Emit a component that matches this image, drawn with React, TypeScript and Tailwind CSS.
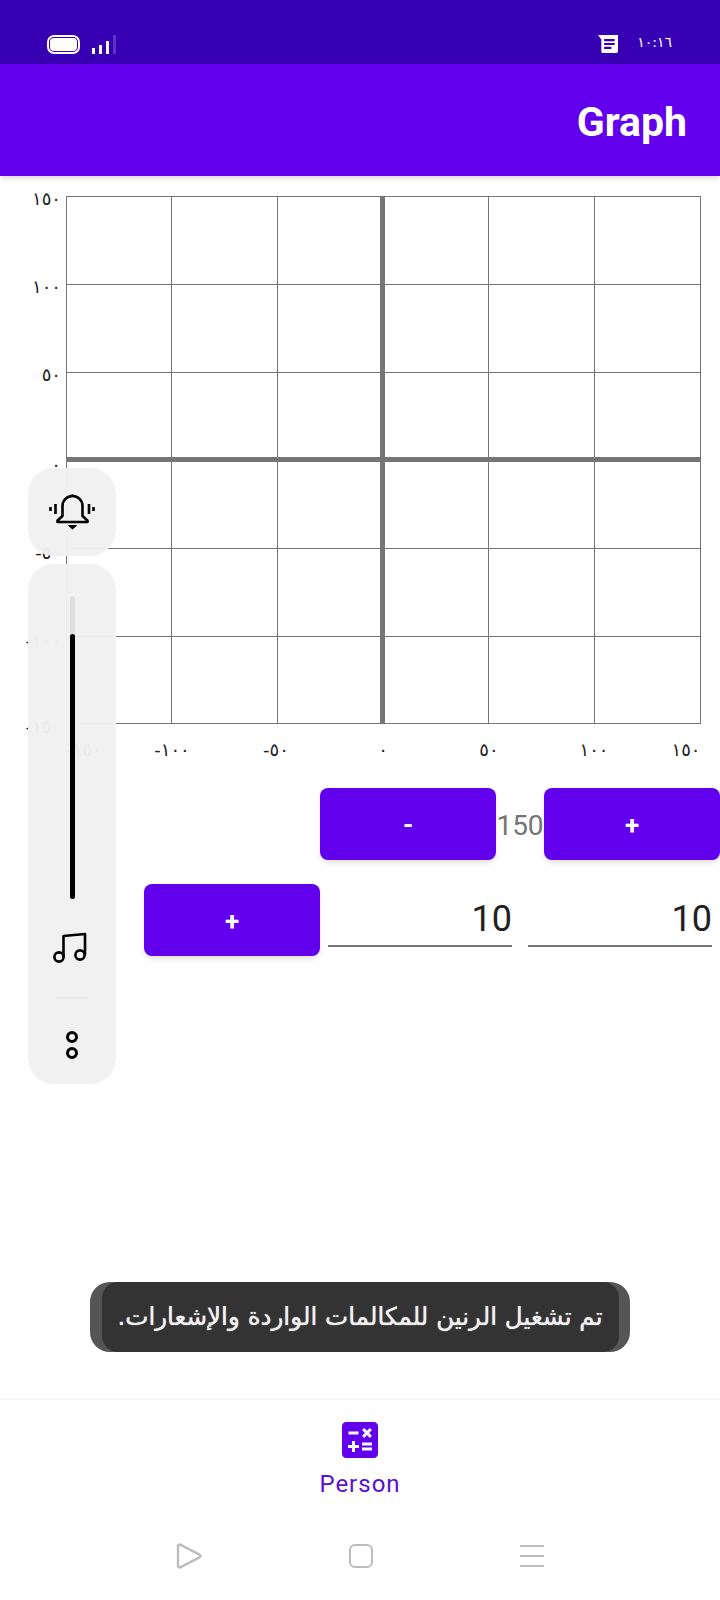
const verticals = [66.5, 171.5, 277.5, 382.5, 488.5, 594.5, 700.5];
const horizontals = [196.5, 284.5, 372.5, 459.5, 548.5, 636.5, 723.5];

const yLabels = [
  { text: "١٥٠", y: 205 },
  { text: "١٠٠", y: 293 },
  { text: "٥٠", y: 381 },
  { text: "٠", y: 471 },
  { text: "-٥٠", y: 559 },
  { text: "-١٠٠", y: 647 },
  { text: "-١٥٠", y: 733 },
];

const xLabels = [
  { text: "-١٥٠", x: 84 },
  { text: "-١٠٠", x: 172 },
  { text: "-٥٠", x: 276 },
  { text: "٠", x: 383 },
  { text: "٥٠", x: 489 },
  { text: "١٠٠", x: 594 },
  { text: "١٥٠", x: 686 },
];

function Chart() {
  return (
    <svg viewBox="0 176 720 594" className="block w-[720px] h-[594px]">
      {verticals.map((x, i) => (
        <line key={x} x1={x} x2={x} y1={196} y2={724} stroke="#757575" strokeWidth={i === 3 ? 5 : 1} />
      ))}
      {horizontals.map((y, i) => (
        <line key={y} x1={66} x2={701} y1={y} y2={y} stroke="#757575" strokeWidth={i === 3 ? 5 : 1} />
      ))}
      {yLabels.map(l => (
        <text key={l.text} x={61} y={l.y} textAnchor="end" className="fill-[#222222] text-[18px] font-['DejaVu_Sans',sans-serif]">{l.text}</text>
      ))}
      {xLabels.map(l => (
        <text key={l.text} x={l.x} y={756} textAnchor="middle" className="fill-[#222222] text-[18px] font-['DejaVu_Sans',sans-serif]">{l.text}</text>
      ))}
    </svg>
  );
}

function StatusBar() {
  return (
    <div className="h-16 bg-[#3700b3] flex items-end justify-between pb-[10px] pl-[47px] pr-[48px]">
      <div className="flex items-end gap-3">
        <div className="w-[33px] h-[19px] rounded-[7px] border-2 border-white p-[1px]">
          <div className="h-full rounded-[4px] bg-white" />
        </div>
        <div className="flex items-end gap-[4px] pr-[1px]">
          <div className="w-[3px] h-[6px] bg-white" />
          <div className="w-[3px] h-[9px] bg-white" />
          <div className="w-[3px] h-[13px] bg-white" />
          <div className="w-[3px] h-[19px] bg-white/20" />
        </div>
      </div>
      <div className="flex items-center gap-[19px] pb-[1px]">
        <svg viewBox="0 0 18 16" className="w-5 h-[18px] fill-white">
          <path fillRule="evenodd" d="M0 0H18V14.5a1.5 1.5 0 0 1-1.5 1.5H4a1 1 0 0 1-1-1V4zM5.5 3.5V5.5H15V3.5zM5.5 7V9H15V7zM5.5 10.5V12.5H12V10.5z" />
        </svg>
        <span className="text-white text-[14px] leading-4 font-['DejaVu_Sans',sans-serif] mb-[3px]">١٠:١٦</span>
      </div>
    </div>
  );
}

function PurpleButton({ label }: { label: string }) {
  return (
    <button className="w-[176px] h-[72px] pt-[3px] rounded-lg bg-[#6200ee] text-white text-[26px] font-bold shadow-md flex items-center justify-center">
      {label}
    </button>
  );
}

function NumberField({ value }: { value: string }) {
  return (
    <div className="w-[184px] h-[63px] border-b-2 border-[#757575] text-right text-[36px] leading-[42px] text-[#212121] pt-[14px]">
      {value}
    </div>
  );
}

function VolumePanels() {
  return (
    <div className="absolute left-[28px] top-[468px] w-[88px] flex flex-col gap-2">
      <div className="h-[88px] rounded-[26px] bg-[#f1f1f1]/97 flex items-center justify-center">
        <svg viewBox="0 0 48 48" className="w-12 h-12 -mt-[2px] fill-none stroke-black" strokeWidth={2.6}>
          <path strokeLinejoin="round" d="M14.5 29V19a10 10 0 0 1 20 0V29l5 4.5V35H9.5V33.5z" />
          <path d="M24.5 7.5V9M7.5 17V27M41 17V27M2.5 20V24M45.5 20V24" />
          <path d="M20.5 38.5H28.5L24.5 42z" className="fill-black" strokeWidth={1} />
        </svg>
      </div>
      <div className="h-[520px] rounded-[26px] bg-[#f1f1f1]/97 flex flex-col items-center pt-8">
        <div className="w-[5px] h-[303px] rounded-full bg-[#dedede] flex flex-col justify-end">
          <div className="h-[265px] rounded-full bg-black" />
        </div>
        <svg viewBox="0 0 36 32" className="w-9 h-8 -ml-1 mt-[32px] fill-none stroke-black" strokeWidth={2.6}>
          <circle cx="7" cy="26" r="4.6" />
          <circle cx="28" cy="24" r="4.6" />
          <path strokeLinejoin="round" d="M11.5 26V5L33 3V24" />
        </svg>
        <div className="w-8 h-[2px] bg-[#e8e8e8] mt-[34px]" />
        <div className="mt-[32px] flex flex-col gap-[4px]">
          <div className="w-[12px] h-[12px] rounded-full border-[3px] border-black" />
          <div className="w-[12px] h-[12px] rounded-full border-[3px] border-black" />
        </div>
      </div>
    </div>
  );
}

function Toast() {
  return (
    <div className="absolute left-[90px] top-[1282px] w-[540px] h-[70px] rounded-[20px] bg-[#555555] flex justify-center">
      <div dir="rtl" className="w-[517px] rounded-[16px] bg-[#333333] flex items-center justify-center text-[#f0f0f0] text-[24.6px] [text-shadow:0_0_1px_#ffffff] font-['DejaVu_Sans',sans-serif] whitespace-nowrap">
        تم تشغيل الرنين للمكالمات الواردة والإشعارات.
      </div>
    </div>
  );
}

export default function App() {
  return (
    <div className="relative w-[720px] h-[1600px] bg-white overflow-hidden font-['Roboto',sans-serif] flex flex-col">
      <StatusBar />
      <div className="relative z-10 h-[112px] bg-[#6200ee] shadow-md flex items-center justify-end pr-[33px] pt-[6px]">
        <h1 className="text-white text-[41px] font-bold">Graph</h1>
      </div>

      <Chart />

      <div className="mt-[18px] flex justify-end items-center">
        <PurpleButton label="-" />
        <span className="w-12 pt-[3px] text-center text-[28px] text-[#757575]">150</span>
        <PurpleButton label="+" />
      </div>

      <div className="mt-6 flex items-start pl-[144px] gap-2">
        <PurpleButton label="+" />
        <div className="flex gap-4">
          <NumberField value="10" />
          <NumberField value="10" />
        </div>
      </div>

      <div className="mt-auto border-t-2 border-[#f5f5f5] h-[202px] flex flex-col items-center">
        <svg viewBox="0 0 24 24" className="w-12 h-12 mt-[16px] -ml-[1px] fill-[#6200ee]">
          <path d="M19 3H5c-1.1 0-2 .9-2 2v14c0 1.1.9 2 2 2h14c1.1 0 2-.9 2-2V5c0-1.1-.9-2-2-2zm-5.97 4.06L14.09 6l1.41 1.41L16.91 6l1.06 1.06-1.41 1.41 1.41 1.41-1.06 1.06-1.41-1.4-1.41 1.41-1.06-1.06 1.41-1.41-1.41-1.42zm-6.78.66h5v1.5h-5v-1.5zM11.5 16h-2v2H8v-2H6v-1.5h2v-2h1.5v2h2V16zm6.5 1.25h-5v-1.5h5v1.5zm0-2.5h-5v-1.5h5v1.5z" />
        </svg>
        <span className="mt-[6px] text-[24px] leading-7 tracking-[1px] text-[#5a10d0]">Person</span>
        <div className="mt-[45px] w-[368px] flex items-center justify-between">
          <svg viewBox="0 0 26 26" className="w-[26px] h-[26px] fill-none stroke-[#bdbdbd]" strokeWidth={2.4}>
            <path strokeLinejoin="round" d="M2 3.5C2 1.8 3.2 1 4.7 1.9L23.5 11.6C25 12.4 25 13.6 23.5 14.4L4.7 24.1C3.2 25 2 24.2 2 22.5z" />
          </svg>
          <div className="w-6 h-6 rounded-[6px] border-2 border-[#bdbdbd]" />
          <div className="w-6 h-[22px] flex flex-col justify-between">
            <div className="h-[2px] bg-[#bdbdbd]" />
            <div className="h-[2px] bg-[#bdbdbd]" />
            <div className="h-[2px] bg-[#bdbdbd]" />
          </div>
        </div>
      </div>

      <VolumePanels />
      <Toast />
    </div>
  );
}
